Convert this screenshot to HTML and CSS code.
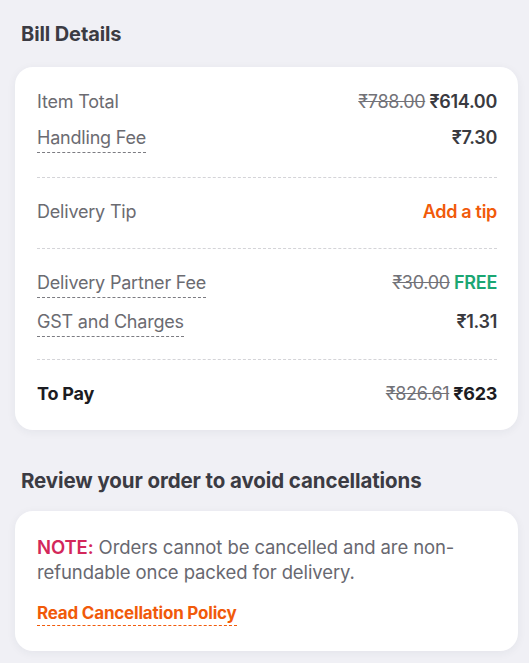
FILE: index.html
```html
<!DOCTYPE html>
<html lang="en">
<head>
<meta charset="utf-8">
<title>Bill Details</title>
<link rel="stylesheet" href="styles.css">
</head>
<body>
<main class="page">
  <h2 class="heading heading-bill">Bill Details</h2>
  <section class="card bill">
    <div class="group first">
      <div class="row">
        <span class="label">Item Total</span>
        <span class="value"><s class="strike">₹788.00</s> ₹614.00</span>
      </div>
      <div class="row">
        <span class="label dotted">Handling Fee</span>
        <span class="value">₹7.30</span>
      </div>
    </div>
    <div class="group">
      <div class="row">
        <span class="label">Delivery Tip</span>
        <span class="value accent">Add a tip</span>
      </div>
    </div>
    <div class="group tight">
      <div class="row">
        <span class="label dotted">Delivery Partner Fee</span>
        <span class="value"><s class="strike">₹30.00</s> <span class="free">FREE</span></span>
      </div>
      <div class="row">
        <span class="label dotted">GST and Charges</span>
        <span class="value">₹1.31</span>
      </div>
    </div>
    <div class="group last">
      <div class="row">
        <span class="label total">To Pay</span>
        <span class="value total"><s class="strike">₹826.61</s> ₹623</span>
      </div>
    </div>
  </section>

  <h2 class="heading heading-review">Review your order to avoid cancellations</h2>
  <section class="card note-card">
    <p class="note"><b class="note-tag">NOTE:</b> <span class="note-text">Orders cannot be cancelled and are non-refundable once packed for delivery.</span></p>
    <a class="policy" href="#">Read Cancellation Policy</a>
  </section>
</main>
</body>
</html>
```
FILE: styles.css
```css
* { box-sizing: border-box; }

html, body {
  margin: 0;
  padding: 0;
  background: #f0f0f5;
}

body {
  font-family: "Inter", "Noto Sans", "Liberation Sans", sans-serif;
  color: #3d3d45;
}

.page {
  padding: 0 11px 12px 15px;
  width: 529px;
  height: 663px;
  overflow: hidden;
}

.heading {
  margin: 0;
  font-size: 20px;
  line-height: 24px;
  font-weight: 700;
  color: #3b3b43;
  padding-left: 6px;
  letter-spacing: -0.1px;
}

.heading-bill {
  padding-top: 22px;
  margin-bottom: 21px;
}

.heading-review {
  font-size: 20.5px;
  margin-top: 39px;
  margin-bottom: 18px;
}

.card {
  background: #ffffff;
  border-radius: 18px;
  box-shadow: 0 2px 10px rgba(40, 44, 63, 0.06);
}

.bill {
  padding: 0 21px 0 22px;
}

.group {
  display: flex;
  flex-direction: column;
  gap: 12px;
  padding: 22px 0 24px;
  border-bottom: 1px dashed #d4d4d8;
}

.group.first {
  padding-top: 23px;
}

.group.tight {
  padding-bottom: 22px;
}

.group.last {
  border-bottom: none;
  padding-bottom: 24px;
}

.row {
  display: flex;
  justify-content: space-between;
  align-items: flex-start;
  line-height: 24px;
  font-size: 18px;
}

.label {
  color: #6b6b71;
  letter-spacing: -0.2px;
}

.label.dotted {
  padding-bottom: 2px;
  border-bottom: 1px dashed #7c7c82;
}

.value {
  font-weight: 600;
  color: #3a3a40;
  letter-spacing: -0.3px;
}

.strike {
  font-weight: 400;
  color: #727278;
}

.accent {
  color: #f15a0a;
}

.free {
  color: #1ba672;
}

.total {
  font-weight: 700;
  color: #1c1c22;
}

.value.total .strike {
  font-weight: 400;
  color: #727278;
}

.note-card {
  padding: 24px 22px 25px;
}

.note {
  margin: 0;
  font-size: 18.5px;
  line-height: 25px;
  color: #686870;
  letter-spacing: -0.1px;
}

.note-tag {
  color: #d3275a;
  font-weight: 600;
}

.policy {
  display: inline-block;
  margin-top: 17px;
  font-size: 17px;
  line-height: 22px;
  padding-bottom: 1px;
  font-weight: 700;
  color: #f15a0a;
  text-decoration: none;
  border-bottom: 1px dashed #f15a0a;
  letter-spacing: -0.2px;
}
```
